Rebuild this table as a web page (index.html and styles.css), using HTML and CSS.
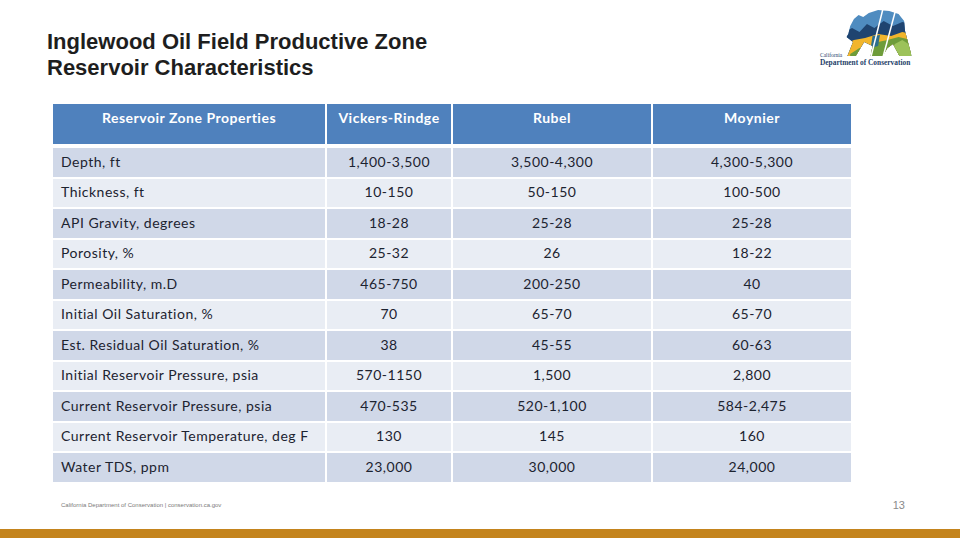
FILE: index.html
```html
<!DOCTYPE html>
<html>
<head>
<meta charset="utf-8">
<link rel="stylesheet" href="styles.css">
</head>
<body>
<div class="slide">
  <header class="top">
    <h1 class="title">Inglewood Oil Field Productive Zone<br>Reservoir Characteristics</h1>
    <div class="logo">
      <svg width="110" height="66" viewBox="0 0 110 66">
        <defs>
          <clipPath id="bear">
            <path d="M38,30 L40,22 L44,15 L49,11 L54,13 L60,9 L70,6 L82,7 L92,10 L98,17 L99,27 L106,52 L93,52 L86,40 L80,44 L75,52 L62,52 L64,42 L55,38 L46,52 L37,52 L43,38 L36,33 Z"/>
          </clipPath>
        </defs>
        <g transform="translate(8 0) scale(0.93 1)">
          <g clip-path="url(#bear)">
            <rect x="0" y="0" width="110" height="60" fill="#4f8cc0"/>
            <path d="M30,30 L42,24 L50,28 L58,20 L66,24 L76,17 L86,22 L96,18 L106,20 L106,60 L30,60 Z" fill="#1f4470"/>
            <path d="M30,42 L44,36 L56,34 L70,30 L84,32 L96,28 L106,30 L106,60 L30,60 Z" fill="#f1b52c"/>
            <path d="M40,50 L50,44 L60,46 L70,38 L80,36 L92,33 L106,36 L106,60 L40,60 Z" fill="#6e9c3a"/>
            <path d="M82,52 L88,40 L96,36 L106,42 L106,60 L80,60 Z" fill="#9cc25a"/>
            <path d="M64,32 L72,31 L70,42 L62,44 Z" fill="#2d6e8e"/>
          </g>
          <g stroke="#ffffff" stroke-width="1.6">
            <line x1="62" y1="54" x2="76" y2="2"/>
            <line x1="75" y1="54" x2="90" y2="2"/>
          </g>
        </g>
        <text x="15" y="53" class="logo-small">California</text>
        <text x="15" y="61" class="logo-big">Department of Conservation</text>
      </svg>
    </div>
  </header>

  <div class="grid">
    <div class="hd first">Reservoir Zone Properties</div>
    <div class="hd">Vickers-Rindge</div>
    <div class="hd">Rubel</div>
    <div class="hd">Moynier</div>
    <div class="gap"></div>

    <div class="c a lab">Depth, ft</div><div class="c a">1,400-3,500</div><div class="c a">3,500-4,300</div><div class="c a">4,300-5,300</div>
    <div class="c b lab">Thickness, ft</div><div class="c b">10-150</div><div class="c b">50-150</div><div class="c b">100-500</div>
    <div class="c a lab">API Gravity, degrees</div><div class="c a">18-28</div><div class="c a">25-28</div><div class="c a">25-28</div>
    <div class="c b lab">Porosity, %</div><div class="c b">25-32</div><div class="c b">26</div><div class="c b">18-22</div>
    <div class="c a lab">Permeability, m.D</div><div class="c a">465-750</div><div class="c a">200-250</div><div class="c a">40</div>
    <div class="c b lab">Initial Oil Saturation, %</div><div class="c b">70</div><div class="c b">65-70</div><div class="c b">65-70</div>
    <div class="c a lab">Est. Residual Oil Saturation, %</div><div class="c a">38</div><div class="c a">45-55</div><div class="c a">60-63</div>
    <div class="c b lab">Initial Reservoir Pressure, psia</div><div class="c b">570-1150</div><div class="c b">1,500</div><div class="c b">2,800</div>
    <div class="c a lab">Current Reservoir Pressure, psia</div><div class="c a">470-535</div><div class="c a">520-1,100</div><div class="c a">584-2,475</div>
    <div class="c b lab">Current Reservoir Temperature, deg F</div><div class="c b">130</div><div class="c b">145</div><div class="c b">160</div>
    <div class="c a lab">Water TDS, ppm</div><div class="c a">23,000</div><div class="c a">30,000</div><div class="c a">24,000</div>
  </div>

  <footer class="foot">
    <span class="credit">California Department of Conservation | conservation.ca.gov</span>
    <span class="page">13</span>
  </footer>
  <div class="bar"></div>
</div>
</body>
</html>
```

FILE: styles.css
```css
html, body {
  margin: 0;
  padding: 0;
  background: #ffffff;
}

.slide {
  width: 960px;
  height: 540px;
  display: flex;
  flex-direction: column;
  overflow: hidden;
  background: #ffffff;
}

.top {
  height: 104px;
  display: flex;
  justify-content: space-between;
  align-items: flex-start;
}

.title {
  margin: 0;
  padding: 29px 0 0 47px;
  font-family: "Liberation Sans", Arial, sans-serif;
  font-weight: bold;
  font-size: 22px;
  line-height: 26px;
  color: #1e1e1e;
}

.logo {
  padding: 4px 45px 0 0;
}

.logo svg {
  display: block;
}

.logo-small {
  font-family: "Liberation Serif", serif;
  font-size: 5.5px;
  fill: #1f3f6a;
}

.logo-big {
  font-family: "Liberation Serif", serif;
  font-size: 7.4px;
  font-weight: bold;
  fill: #1f3f6a;
}

.grid {
  margin-left: 53px;
  width: 798px;
  display: grid;
  grid-template-columns: 272px 124px 198px 198px;
  grid-template-rows: 40px 0px repeat(11, 28.5px);
  column-gap: 2px;
  row-gap: 2px;
  font-family: Lato, "Open Sans", sans-serif;
  font-size: 14px;
  letter-spacing: 0.5px;
  color: #1c2330;
}

.gap {
  grid-column: 1 / 5;
}

.hd {
  background: #4f81bd;
  color: #ffffff;
  font-weight: bold;
  text-align: center;
  padding-top: 5px;
  box-sizing: border-box;
}

.c {
  display: flex;
  align-items: center;
  justify-content: center;
  padding-bottom: 2px;
  box-sizing: border-box;
}

.c.lab {
  justify-content: flex-start;
  padding-left: 8px;
}

.a {
  background: #d0d8e8;
}

.b {
  background: #e9edf4;
}

.foot {
  display: flex;
  justify-content: space-between;
  align-items: center;
  padding: 16px 55px 0 61px;
  height: 14px;
}

.credit {
  font-family: "Liberation Sans", Arial, sans-serif;
  font-size: 6px;
  color: #7a7a7a;
}

.page {
  font-family: "Liberation Sans", Arial, sans-serif;
  font-size: 11px;
  color: #8a8a8a;
}

.bar {
  margin-top: auto;
  margin-bottom: 2px;
  height: 9px;
  background: #c4841d;
}
```
